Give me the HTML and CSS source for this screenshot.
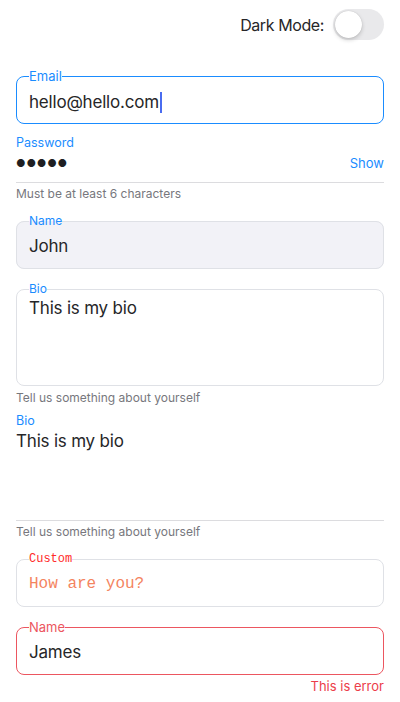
FILE: index.html
```html
<!DOCTYPE html>
<html lang="en">
<head>
<meta charset="utf-8">
<title>Text fields</title>
<link rel="stylesheet" href="styles.css">
</head>
<body>
<main class="page">
  <div class="topbar">
    <span class="topbar-label">Dark Mode:</span>
    <span class="switch"><span class="switch-knob"></span></span>
  </div>

  <fieldset class="box box-focused email">
    <legend class="box-label">Email</legend>
    <div class="box-value">hello@hello.com<span class="caret"></span></div>
  </fieldset>

  <div class="line-field password">
    <div class="line-label">Password</div>
    <div class="line-row pw-row">
      <span class="dots">●●●●●</span>
      <span class="show">Show</span>
    </div>
  </div>
  <div class="helper helper-pw">Must be at least 6 characters</div>

  <fieldset class="box box-filled name">
    <legend class="box-label">Name</legend>
    <div class="box-value">John</div>
  </fieldset>

  <fieldset class="box bio-box">
    <legend class="box-label">Bio</legend>
    <div class="box-value multiline">This is my bio</div>
  </fieldset>
  <div class="helper helper-bio">Tell us something about yourself</div>

  <div class="line-field bio-line">
    <div class="line-label">Bio</div>
    <div class="line-row multiline-row">This is my bio</div>
  </div>
  <div class="helper helper-bio2">Tell us something about yourself</div>

  <fieldset class="box box-custom custom">
    <legend class="box-label custom-label">Custom</legend>
    <div class="box-value custom-value">How are you?</div>
  </fieldset>

  <fieldset class="box box-error error">
    <legend class="box-label">Name</legend>
    <div class="box-value">James</div>
  </fieldset>
  <div class="error-text">This is error</div>
</main>
</body>
</html>
```

FILE: styles.css
```css
* { box-sizing: border-box; }

html, body {
  margin: 0;
  padding: 0;
  background: #ffffff;
}

body {
  font-family: Inter, "Noto Sans", Roboto, sans-serif;
  color: #262628;
}

.page {
  display: flex;
  flex-direction: column;
  padding: 9px 16px 0 16px;
}

.topbar {
  display: flex;
  justify-content: flex-end;
  align-items: center;
  gap: 9px;
  height: 31px;
}

.topbar-label {
  font-size: 16px;
  letter-spacing: -0.4px;
  color: #262628;
}

.switch {
  position: relative;
  width: 51px;
  height: 31px;
  border-radius: 16px;
  background: #e9e9eb;
}

.switch-knob {
  position: absolute;
  left: 2px;
  top: 2px;
  width: 27px;
  height: 27px;
  border-radius: 50%;
  background: #ffffff;
  box-shadow: 0 2px 4px rgba(0, 0, 0, 0.18), 0 0 1px rgba(0, 0, 0, 0.2);
}

/* outlined boxes */
.box {
  margin: 0;
  padding: 0 12px;
  border: 1px solid #dfe1e6;
  border-radius: 8px;
  min-width: 0;
}

.box-label {
  padding: 0;
  font-size: 12px;
  line-height: 16px;
  color: #1a8cff;
}

.box-value {
  height: 39px;
  display: flex;
  align-items: center;
  font-size: 17px;
  letter-spacing: -0.2px;
  color: #262628;
  padding-bottom: 5px;
}

.box-focused {
  border-color: #1a8cff;
  border-width: 1.3px;
}

.box-focused .box-label {
  font-size: 13px;
}

.email { margin-top: 28px; }

.email .box-value { padding-bottom: 3px; }

.caret {
  display: inline-block;
  width: 2px;
  height: 21px;
  margin-left: 1px;
  background: #4a6cf0;
}

.box-filled {
  background: #f2f2f7;
}

.name { margin-top: 11px; }

.bio-box { margin-top: 12px; }

.multiline {
  height: 88px;
  align-items: flex-start;
  line-height: 22px;
  padding-top: 0;
  padding-bottom: 0;
}

.custom { margin-top: 11px; }

.custom-label {
  font-family: "Liberation Mono", "DejaVu Sans Mono", monospace;
  font-size: 12px;
  color: #ff2a2a;
}

.custom-value {
  font-family: "Liberation Mono", "DejaVu Sans Mono", monospace;
  font-size: 16px;
  letter-spacing: 0;
  color: #f4845f;
  padding-bottom: 5px;
}

.box-error {
  border-color: #ec5660;
  border-width: 1.3px;
}

.box-error .box-label {
  font-size: 13px;
  color: #ec5660;
}

.error { margin-top: 12px; }

.error-text {
  margin-top: 3px;
  align-self: flex-end;
  font-size: 13px;
  line-height: 16px;
  color: #ec3d4a;
}

/* underline fields */
.line-field {
  display: flex;
  flex-direction: column;
  border-bottom: 1px solid #dcdcdf;
}

.line-label {
  font-size: 12.5px;
  line-height: 16px;
  color: #1a8cff;
}

.password { margin-top: 11px; }

.line-row {
  display: flex;
  align-items: center;
  justify-content: space-between;
}

.pw-row {
  height: 31px;
  padding-bottom: 7px;
}

.dots {
  font-size: 10.5px;
  letter-spacing: 0.8px;
  color: #1f1f22;
}

.show {
  font-size: 13px;
  color: #1a8cff;
}

.multiline-row {
  height: 91px;
  align-items: flex-start;
  font-size: 17px;
  letter-spacing: -0.2px;
  line-height: 24px;
  color: #262628;
}

.bio-line { margin-top: 7px; }

.helper {
  font-size: 12px;
  line-height: 16px;
  color: #77777d;
}

.helper-pw { margin-top: 3px; }
.helper-bio { margin-top: 4px; }
.helper-bio2 { margin-top: 3px; }
```
